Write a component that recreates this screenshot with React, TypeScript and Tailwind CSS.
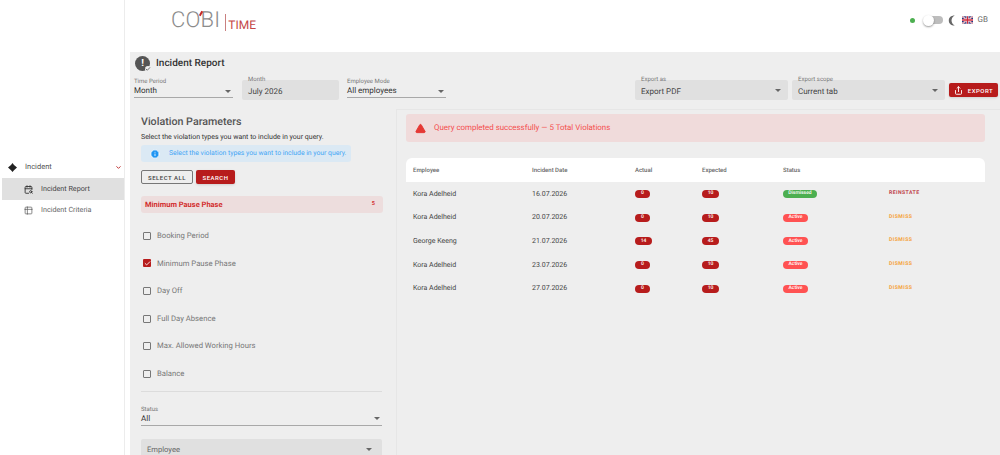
import React from "react";
import { CalendarSearch, ChevronDown, Info, Share, Table2, TriangleAlert, Check } from "lucide-react";

const violations = [
  { label: "Booking Period", checked: false },
  { label: "Minimum Pause Phase", checked: true },
  { label: "Day Off", checked: false },
  { label: "Full Day Absence", checked: false },
  { label: "Max. Allowed Working Hours", checked: false },
  { label: "Balance", checked: false },
];

const rows = [
  { name: "Kora Adelheid", date: "16.07.2026", actual: "0", expected: "10", status: "Dismissed", action: "REINSTATE" },
  { name: "Kora Adelheid", date: "20.07.2026", actual: "0", expected: "10", status: "Active", action: "DISMISS" },
  { name: "George Keeng", date: "21.07.2026", actual: "14", expected: "45", status: "Active", action: "DISMISS" },
  { name: "Kora Adelheid", date: "23.07.2026", actual: "0", expected: "10", status: "Active", action: "DISMISS" },
  { name: "Kora Adelheid", date: "27.07.2026", actual: "0", expected: "10", status: "Active", action: "DISMISS" },
];

function Caret() {
  return <span className="h-0 w-0 border-x-[3px] border-t-[3px] border-x-transparent border-t-[#666]" />;
}

function UnderlineSelect({ label, value, className }: { label: string; value: string; className: string }) {
  return (
    <div className={`flex h-[21px] flex-col border-b border-[#a8a8a8] ${className}`}>
      <span className="text-[6px] leading-[9px] text-[#777]">{label}</span>
      <div className="flex items-center justify-between pr-[2px]">
        <span className="text-[8px] leading-[10px] text-[#333]">{value}</span>
        <Caret />
      </div>
    </div>
  );
}

function FilledSelect({ label, value, caret, className }: { label: string; value: string; caret?: boolean; className: string }) {
  return (
    <div className={`flex h-[20px] items-center justify-between rounded-[2px] bg-[#e0e0e0] pl-[6px] pr-[7px] ${className}`}>
      <div className="relative leading-[12px]">
        <span className="absolute left-0 top-[-8px] whitespace-nowrap text-[6px] leading-[9px] text-[#777]">{label}</span>
        <span className="text-[8px] text-[#444]">{value}</span>
      </div>
      {caret && <Caret />}
    </div>
  );
}

function Pill({ children, className }: { children: React.ReactNode; className: string }) {
  return (
    <span className={`inline-flex h-[8px] items-center justify-center rounded-full text-[5px] font-medium leading-none text-white ${className}`}>
      {children}
    </span>
  );
}

export default function App() {
  return (
    <div className="flex h-[455px] w-[1000px] overflow-hidden bg-white font-['Roboto',sans-serif] [text-rendering:geometricPrecision]">
      {/* sidebar */}
      <aside className="h-full w-[125px] shrink-0 border-r border-[#ececec] pt-[156px]">
        <div className="flex h-[22px] items-center pl-[8px] pr-[2px]">
          <svg viewBox="0 0 12 12" className="h-[9px] w-[9px] fill-[#222]">
            <path d="M6 0 L8 2.5 L12 6 L8 9.5 L6 12 L4 9.5 L0 6 L4 2.5 Z" />
          </svg>
          <span className="ml-[8px] flex-1 text-[7.5px] text-[#555]">Incident</span>
          <ChevronDown className="h-[7px] w-[7px] text-[#b71c1c]" strokeWidth={3} />
        </div>
        <div className="ml-[2px] flex h-[22px] items-center bg-[#e0e0e0] pl-[22px]">
          <CalendarSearch className="h-[9px] w-[9px] text-[#333]" strokeWidth={2.4} />
          <span className="ml-[8px] text-[7.2px] text-[#444]">Incident Report</span>
        </div>
        <div className="ml-[2px] flex h-[21px] items-center pl-[22px]">
          <Table2 className="h-[9px] w-[9px] text-[#666]" strokeWidth={2} />
          <span className="ml-[8px] text-[7.2px] text-[#666]">Incident Criteria</span>
        </div>
      </aside>

      <div className="flex min-w-0 flex-1 flex-col">
        {/* top bar */}
        <header className="flex h-[52px] shrink-0 items-center justify-between pr-[12px]">
          <div className="ml-[46px] mt-[-11px] flex items-end">
            <div className="relative text-[22px] font-light leading-[20px] tracking-[0.2px] text-[#8c8c8c]">
              COBI
              <span className="absolute left-[29px] top-[0px] h-[5px] w-[2px] rotate-[30deg] bg-[#c62828]" />
            </div>
            <span className="ml-[5px] h-[17px] w-px bg-[#c98080]" />
            <span className="ml-[2px] text-[12px] leading-[12px] text-[#c44545]">TIME</span>
          </div>
          <div className="mt-[-12px] flex items-center">
            <span className="h-[5px] w-[5px] rounded-full bg-[#4caf50]" />
            <div className="relative ml-[9px] h-[8px] w-[19px] rounded-full bg-[#bdbdbd]">
              <span className="absolute left-[-1px] top-[-1.5px] h-[11px] w-[11px] rounded-full bg-white shadow-[0_1px_2px_rgba(0,0,0,0.4)]" />
            </div>
            <svg viewBox="0 0 8 12" className="ml-[5px] h-[11px] w-[8px] fill-[#666]">
              <path d="M7 0.5 C2.5 0.5 0.5 3 0.5 6 C0.5 9 2.5 11.5 7 11.5 C4.5 10 3.5 8 3.5 6 C3.5 4 4.5 2 7 0.5 Z" />
            </svg>
            <svg viewBox="0 0 60 40" className="ml-[6px] h-[8px] w-[11px]">
              <rect width="60" height="40" fill="#26347a" />
              <path d="M0 0 L60 40 M60 0 L0 40" stroke="#fff" strokeWidth="8" />
              <path d="M0 0 L60 40 M60 0 L0 40" stroke="#cf2a3c" strokeWidth="3" />
              <path d="M30 0 V40 M0 20 H60" stroke="#fff" strokeWidth="12" />
              <path d="M30 0 V40 M0 20 H60" stroke="#cf2a3c" strokeWidth="7" />
            </svg>
            <span className="ml-[5px] text-[8px] text-[#666]">GB</span>
          </div>
        </header>

        {/* content */}
        <main className="ml-[5px] flex min-h-0 flex-1 flex-col bg-[#eeeeee]">
          <div className="flex h-[28px] shrink-0 items-center pb-[6px] pl-[5px]">
            <div className="relative flex h-[15px] w-[15px] items-center justify-center rounded-full bg-[#555] text-[10px] font-bold text-white">
              !
              <Check className="absolute bottom-[-1px] right-[-1px] h-[6px] w-[6px] rounded-full bg-[#eee] text-[#444]" strokeWidth={3} />
            </div>
            <span className="ml-[6px] text-[10px] font-medium text-[#333]">Incident Report</span>
          </div>

          <div className="flex h-[20px] shrink-0 items-start pl-[4px] pr-[2px]">
            <UnderlineSelect label="Time Period" value="Month" className="mt-[-3px] w-[99px]" />
            <FilledSelect label="Month" value="July 2026" className="ml-[9px] w-[97px]" />
            <UnderlineSelect label="Employee Mode" value="All employees" className="ml-[8px] mt-[-3px] w-[99px]" />
            <FilledSelect label="Export as" value="Export PDF" caret className="ml-[189px] w-[153px]" />
            <FilledSelect label="Export scope" value="Current tab" caret className="ml-[4px] w-[153px]" />
            <button className="ml-[4px] mt-[3px] flex h-[14px] w-[49px] items-center justify-center rounded-[2px] bg-[#b71c1c] text-[6px] font-medium tracking-[0.5px] text-white shadow-sm">
              <Share className="mr-[5px] h-[9px] w-[9px]" strokeWidth={2.4} />
              EXPORT
            </button>
          </div>

          <div className="flex min-h-0 flex-1 pt-[9px]">
            {/* left panel */}
            <section className="w-[266px] shrink-0 pl-[11px] pr-[13px]">
              <h2 className="mt-[7px] text-[10.7px] font-medium leading-[12px] text-[#555]">Violation Parameters</h2>
              <p className="mt-[4px] whitespace-nowrap text-[7px] leading-[10px] text-[#333]">Select the violation types you want to include in your query.</p>
              <div className="mt-[3px] flex h-[17px] w-[210px] items-center rounded-[3px] bg-[#dbe9f4] pl-[9px]">
                <Info className="h-[10px] w-[10px] shrink-0 fill-[#2196f3] text-white" />
                <span className="ml-[9px] whitespace-nowrap text-[6.8px] text-[#42a5f5]">Select the violation types you want to include in your query.</span>
              </div>
              <div className="mt-[8px] flex gap-[3px]">
                <button className="h-[14px] w-[52px] rounded-[2px] border border-[#777] text-[6px] font-medium tracking-[0.5px] text-[#444]">SELECT ALL</button>
                <button className="h-[14px] w-[39px] rounded-[2px] bg-[#b71c1c] text-[6px] font-medium tracking-[0.5px] text-white shadow-sm">SEARCH</button>
              </div>
              <div className="mt-[12px] flex h-[17px] items-center justify-between rounded-[3px] bg-[#eddddd] pl-[4px] pr-[8px] text-[7.5px] font-bold text-[#d32f2f]">
                <span>Minimum Pause Phase</span>
                <span className="text-[5.5px]">5</span>
              </div>
              <div className="mt-[9px] flex flex-col">
                {violations.map((v) => (
                  <label key={v.label} className="flex h-[27.6px] items-center pl-[2px]">
                    {v.checked ? (
                      <span className="flex h-[8px] w-[8px] items-center justify-center rounded-[1px] bg-[#b71c1c]">
                        <Check className="h-[7px] w-[7px] text-white" strokeWidth={3} />
                      </span>
                    ) : (
                      <span className="h-[8px] w-[8px] rounded-[1px] border border-[#777]" />
                    )}
                    <span className="ml-[6px] text-[7.7px] text-[#777]">{v.label}</span>
                  </label>
                ))}
              </div>
              <div className="mt-[3px] h-px w-[241px] bg-[#dcdcdc]" />
              <UnderlineSelect label="Status" value="All" className="mt-[13px] w-[241px]" />
              <div className="mt-[13px] flex h-[24px] w-[241px] items-start justify-between rounded-[2px] bg-[#e0e0e0] pl-[6px] pr-[10px] pt-[5px]">
                <span className="text-[7.6px] text-[#666]">Employee</span>
                <span className="mt-[4px] flex"><Caret /></span>
              </div>
            </section>

            {/* right panel */}
            <section className="min-w-0 flex-1 border-l border-t border-[#e6e6e6] pl-[9px] pr-[15px] pt-[4px]">
              <div className="flex h-[28px] items-center rounded-[3px] bg-[#f0dbdb] pl-[9px] text-[#f44e4e]">
                <TriangleAlert className="h-[11px] w-[11px] fill-[#e53935] text-[#e53935]" />
                <span className="ml-[8px] text-[7.9px]">Query completed successfully — 5 Total Violations</span>
              </div>
              <div className="mt-[16px] grid grid-cols-[126px_103px_67px_81px_106px_1fr]">
                <div className="col-span-6 grid h-[24px] grid-cols-subgrid items-center rounded-t-[6px] bg-white text-[6px] font-medium text-[#666]">
                  <span className="pl-[7px]">Employee</span>
                  <span>Incident Date</span>
                  <span>Actual</span>
                  <span>Expected</span>
                  <span className="col-span-2">Status</span>
                </div>
                {rows.map((r) => (
                  <div key={r.date} className="col-span-6 grid h-[23.7px] grid-cols-subgrid items-center text-[7px] text-[#444]">
                    <span className="pl-[7px]">{r.name}</span>
                    <span>{r.date}</span>
                    <span className="flex">
                      <Pill className={`bg-[#b71c1c] ${r.actual === "14" ? "w-[17px]" : "w-[15px]"}`}>{r.actual}</Pill>
                    </span>
                    <span className="flex">
                      <Pill className="w-[17px] bg-[#b71c1c]">{r.expected}</Pill>
                    </span>
                    <span className="flex">
                      <Pill className={r.status === "Active" ? "w-[25px] bg-[#ff5252]" : "w-[34px] bg-[#4caf50]"}>{r.status}</Pill>
                    </span>
                    <span className={`text-[5.2px] font-bold tracking-[0.4px] ${r.action === "DISMISS" ? "text-[#f5a340]" : "text-[#c0444c]"}`}>
                      {r.action}
                    </span>
                  </div>
                ))}
              </div>
            </section>
          </div>
        </main>
      </div>
    </div>
  );
}
